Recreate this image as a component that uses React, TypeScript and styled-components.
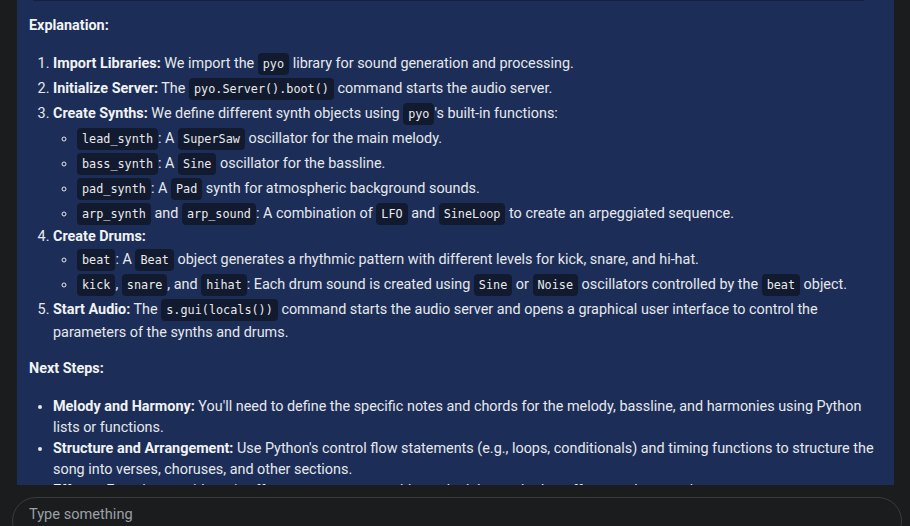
import React from "react";
import styled, { createGlobalStyle } from "styled-components";

const Global = createGlobalStyle`
  html, body { margin: 0; padding: 0; background: #1b1c1e; }
  body { font-family: Roboto, "Noto Sans", Arial, sans-serif; overflow: hidden; }
`;

const Page = styled.div`
  width: 910px;
  height: 526px;
  display: flex;
  flex-direction: column;
  background: #1b1c1e;
  overflow: hidden;
`;

const Panel = styled.div`
  margin-left: 17px;
  width: 877px;
  height: 485px;
  flex: none;
  box-sizing: border-box;
  padding: 0 12px;
  background: #1c2e58;
  overflow: hidden;
  color: #e6e8ec;
  font-size: 14.4px;
  line-height: 21px;
`;

const CodeEdge = styled.div`
  height: 1px;
  margin: 0 18px 0 4px;
  background: #14203d;
`;

const Heading = styled.p<{ $first?: boolean }>`
  margin: ${(p) => (p.$first ? "14px 0 0" : "15px 0 0")};
  font-weight: 700;
  color: #f1f3f4;
`;

const Ordered = styled.ol`
  margin: 15px 0 0;
  padding-left: 24px;
`;

const Bullets = styled.ul<{ $nested?: boolean }>`
  margin: ${(p) => (p.$nested ? "0" : "17px 0 0")};
  padding-left: 24px;
  list-style-type: ${(p) => (p.$nested ? "circle" : "disc")};
`;

const Item = styled.li`
  margin: 0;
`;

const Strong = styled.b`
  font-weight: 700;
  color: #f1f3f4;
`;

const Code = styled.code`
  display: inline-block;
  padding: 2px 5px;
  margin: 1.5px 0;
  line-height: 18px;
  border-radius: 4px;
  background: #121a2f;
  color: #e8eaed;
  font-family: "DejaVu Sans Mono", "Liberation Mono", monospace;
  font-size: 11.8px;
  vertical-align: baseline;
`;

const InputBar = styled.div`
  margin: 12px 8px 0 12px;
  height: 48px;
  flex: none;
  box-sizing: border-box;
  border: 1px solid #3a3b3e;
  border-radius: 24px;
  display: flex;
  align-items: flex-start;
  padding: 6px 16px 0;
`;

const Field = styled.input`
  flex: 1;
  background: transparent;
  border: none;
  outline: none;
  padding: 0;
  font-family: Roboto, "Noto Sans", Arial, sans-serif;
  font-size: 14.6px;
  line-height: 20px;
  color: #e8eaed;
  &::placeholder { color: #9aa0a6; }
`;

export default function App() {
  return (
    <Page>
      <Global />
      <Panel>
        <CodeEdge />
        <Heading $first>Explanation:</Heading>
        <Ordered>
          <Item>
            <Strong>Import Libraries:</Strong> We import the <Code>pyo</Code> library for sound generation and processing.
          </Item>
          <Item>
            <Strong>Initialize Server:</Strong> The <Code>pyo.Server().boot()</Code> command starts the audio server.
          </Item>
          <Item>
            <Strong>Create Synths:</Strong> We define different synth objects using <Code>pyo</Code>'s built-in functions:
            <Bullets $nested>
              <Item><Code>lead_synth</Code>: A <Code>SuperSaw</Code> oscillator for the main melody.</Item>
              <Item><Code>bass_synth</Code>: A <Code>Sine</Code> oscillator for the bassline.</Item>
              <Item><Code>pad_synth</Code>: A <Code>Pad</Code> synth for atmospheric background sounds.</Item>
              <Item><Code>arp_synth</Code> and <Code>arp_sound</Code>: A combination of <Code>LFO</Code> and <Code>SineLoop</Code> to create an arpeggiated sequence.</Item>
            </Bullets>
          </Item>
          <Item>
            <Strong>Create Drums:</Strong>
            <Bullets $nested>
              <Item><Code>beat</Code>: A <Code>Beat</Code> object generates a rhythmic pattern with different levels for kick, snare, and hi-hat.</Item>
              <Item><Code>kick</Code>, <Code>snare</Code>, and <Code>hihat</Code>: Each drum sound is created using <Code>Sine</Code> or <Code>Noise</Code> oscillators controlled by the <Code>beat</Code> object.</Item>
            </Bullets>
          </Item>
          <Item>
            <Strong>Start Audio:</Strong> The <Code>s.gui(locals())</Code> command starts the audio server and opens a graphical user interface to control the parameters of the synths and drums.
          </Item>
        </Ordered>
        <Heading>Next Steps:</Heading>
        <Bullets>
          <Item><Strong>Melody and Harmony:</Strong> You'll need to define the specific notes and chords for the melody, bassline, and harmonies using Python lists or functions.</Item>
          <Item><Strong>Structure and Arrangement:</Strong> Use Python's control flow statements (e.g., loops, conditionals) and timing functions to structure the song into verses, choruses, and other sections.</Item>
          <Item><Strong>Effects:</Strong> Experiment with pyo's effects processors to add reverb, delay, and other effects to the sounds.</Item>
        </Bullets>
      </Panel>
      <InputBar>
        <Field placeholder="Type something" />
      </InputBar>
    </Page>
  );
}
